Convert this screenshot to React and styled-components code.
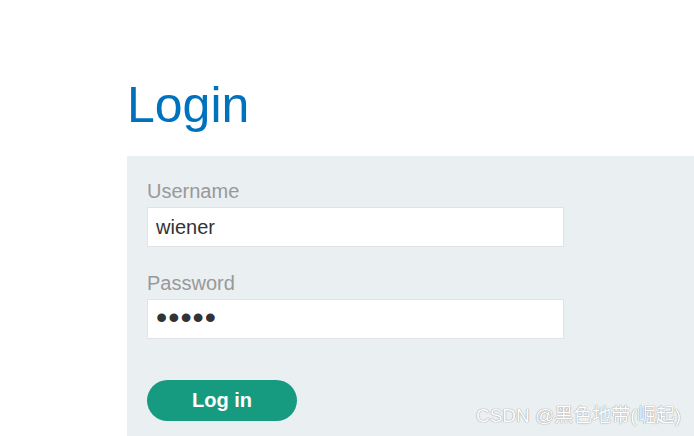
import styled, { createGlobalStyle } from "styled-components";

const GlobalStyle = createGlobalStyle`
  html, body {
    margin: 0;
    padding: 0;
    background: #fff;
    font-family: "Liberation Sans", Arial, sans-serif;
  }
`;

export default function App() {
  return (
    <>
      <GlobalStyle />
      <StyledPage>
        <StyledTitle>Login</StyledTitle>
        <StyledPanel>
          <StyledForm onSubmit={(e) => e.preventDefault()}>
            <StyledLabel htmlFor="username">Username</StyledLabel>
            <StyledInput id="username" type="text" defaultValue="wiener" />
            <StyledLabel htmlFor="password" $spaced>
              Password
            </StyledLabel>
            <StyledInput id="password" type="password" defaultValue="peter" $secret />
            <StyledButton type="submit">Log in</StyledButton>
          </StyledForm>
        </StyledPanel>
      </StyledPage>
      <StyledWatermark>CSDN @黑色地带(崛起)</StyledWatermark>
    </>
  );
}

const StyledPage = styled.main`
  width: 694px;
  height: 436px;
  overflow: hidden;
  padding-left: 127px;
  box-sizing: border-box;
`;

const StyledTitle = styled.h1`
  margin: 0 0 21px;
  padding-top: 75px;
  font-size: 50px;
  line-height: 60px;
  font-weight: normal;
  color: #0071bc;
`;

const StyledPanel = styled.section`
  background: #eaeff2;
  padding: 21px 20px 40px;
  min-height: 320px;
`;

const StyledForm = styled.form`
  display: flex;
  flex-direction: column;
  align-items: flex-start;
`;

const StyledLabel = styled.label`
  font-size: 20px;
  line-height: 28px;
  color: #999;
  margin-top: ${(p) => (p.$spaced ? "22px" : "0")};
  margin-bottom: 2px;
`;

const StyledInput = styled.input`
  width: 417px;
  height: 40px;
  box-sizing: border-box;
  border: 1px solid #e0e3e5;
  background: #fff;
  padding: ${(p) => (p.$secret ? "0 8px 4px" : "0 8px")};
  font-family: "Liberation Sans", Arial, sans-serif;
  font-size: ${(p) => (p.$secret ? "32px" : "20px")};
  letter-spacing: ${(p) => (p.$secret ? "1px" : "0")};
  color: #333;
  outline: none;
`;

const StyledButton = styled.button`
  margin-top: 41px;
  width: 150px;
  height: 41px;
  border: none;
  border-radius: 21px;
  background: #179b80;
  color: #fff;
  font-family: "Liberation Sans", Arial, sans-serif;
  font-size: 20px;
  font-weight: bold;
  cursor: pointer;
`;

const StyledWatermark = styled.div`
  position: absolute;
  right: 13px;
  bottom: 9px;
  font-family: "Liberation Sans", "Noto Sans CJK SC", sans-serif;
  font-size: 19px;
  color: #fff;
  text-shadow: 0 0 1px #999, 0 0 1px #999;
`;
